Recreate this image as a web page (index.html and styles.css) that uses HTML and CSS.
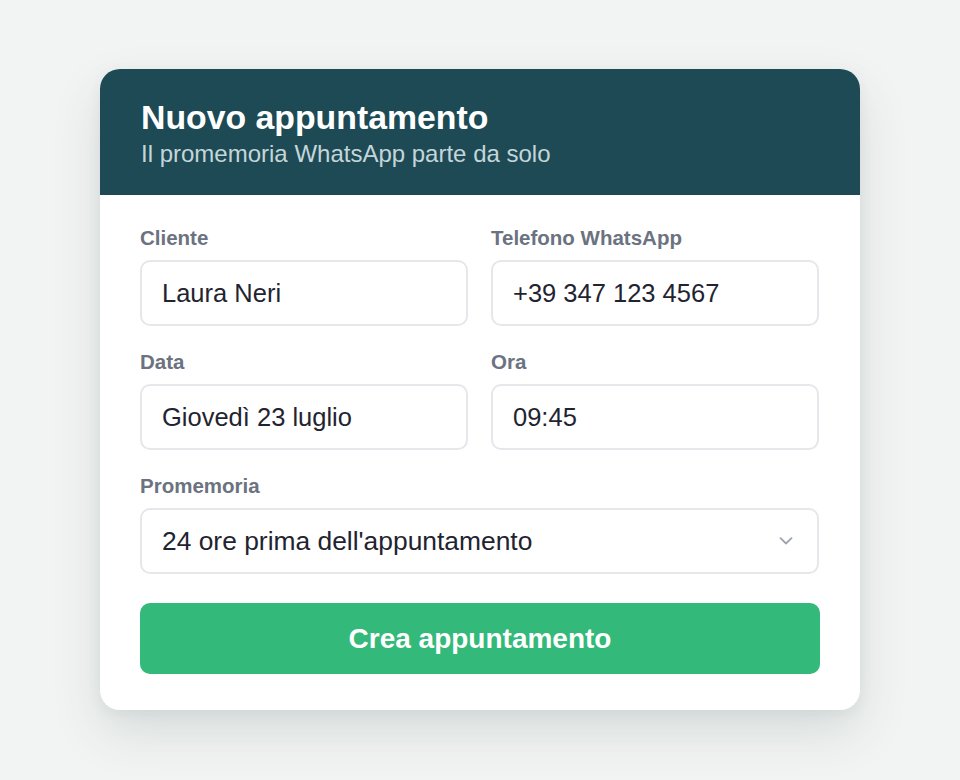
FILE: index.html
```html
<!DOCTYPE html>
<html lang="it">
<head>
<meta charset="utf-8">
<title>Nuovo appuntamento</title>
<link rel="stylesheet" href="styles.css">
</head>
<body>
<div class="card">
  <div class="card-header">
    <h1 class="title">Nuovo appuntamento</h1>
    <p class="subtitle">Il promemoria WhatsApp parte da solo</p>
  </div>
  <div class="card-body">
    <div class="grid">
      <div class="field">
        <div class="label">Cliente</div>
        <div class="input">Laura Neri</div>
      </div>
      <div class="field">
        <div class="label">Telefono WhatsApp</div>
        <div class="input">+39 347 123 4567</div>
      </div>
      <div class="field">
        <div class="label">Data</div>
        <div class="input">Giovedì 23 luglio</div>
      </div>
      <div class="field">
        <div class="label">Ora</div>
        <div class="input">09:45</div>
      </div>
      <div class="field full">
        <div class="label">Promemoria</div>
        <div class="input select">
          <span>24 ore prima dell'appuntamento</span>
          <svg class="chevron" width="14" height="8" viewBox="0 0 14 8"><path d="M1.5 1.2 L7 6.5 L12.5 1.2" fill="none" stroke="#9ca3af" stroke-width="1.8" stroke-linecap="round" stroke-linejoin="round"/></svg>
        </div>
      </div>
    </div>
    <div class="button">Crea appuntamento</div>
  </div>
</div>
</body>
</html>
```
FILE: styles.css
```css
* { box-sizing: border-box; }
html, body { margin: 0; padding: 0; }
body {
  background: #f2f4f3;
  font-family: "Liberation Sans", Arial, Helvetica, sans-serif;
  height: 780px;
  overflow: hidden;
}
.card {
  width: 760px;
  margin: 69px auto 0;
  background: #ffffff;
  border-radius: 20px;
  overflow: hidden;
  box-shadow: 0 22px 50px rgba(30, 60, 60, 0.13), 0 4px 14px rgba(30, 60, 60, 0.06);
}
.card-header {
  background: #1d4a55;
  height: 126px;
  padding: 28px 40px 0 41px;
}
.title {
  margin: 0;
  color: #ffffff;
  font-size: 33.8px;
  line-height: 40px;
  font-weight: 700;
}
.subtitle {
  margin: 2px 0 0;
  color: #c4d6d9;
  font-size: 24px;
  line-height: 30px;
}
.card-body {
  padding: 32px 40px 36px;
}
.grid {
  display: grid;
  grid-template-columns: 328px 328px;
  column-gap: 23px;
  row-gap: 25px;
}
.field.full { grid-column: 1 / span 2; }
.label {
  color: #6b7280;
  font-size: 20.5px;
  line-height: 22px;
  font-weight: 700;
  margin-bottom: 11px;
}
.input {
  height: 66px;
  border: 2px solid #e5e7eb;
  border-radius: 10px;
  padding: 0 20px;
  display: flex;
  align-items: center;
  color: #1f2430;
  font-size: 25.5px;
}
.select { justify-content: space-between; }
.select span { font-size: 26.4px; }
.chevron { margin-right: 4px; }
.button {
  margin-top: 29px;
  height: 71px;
  border-radius: 10px;
  background: #33b979;
  color: #ffffff;
  font-size: 28px;
  font-weight: 700;
  display: flex;
  align-items: center;
  justify-content: center;
}
```
